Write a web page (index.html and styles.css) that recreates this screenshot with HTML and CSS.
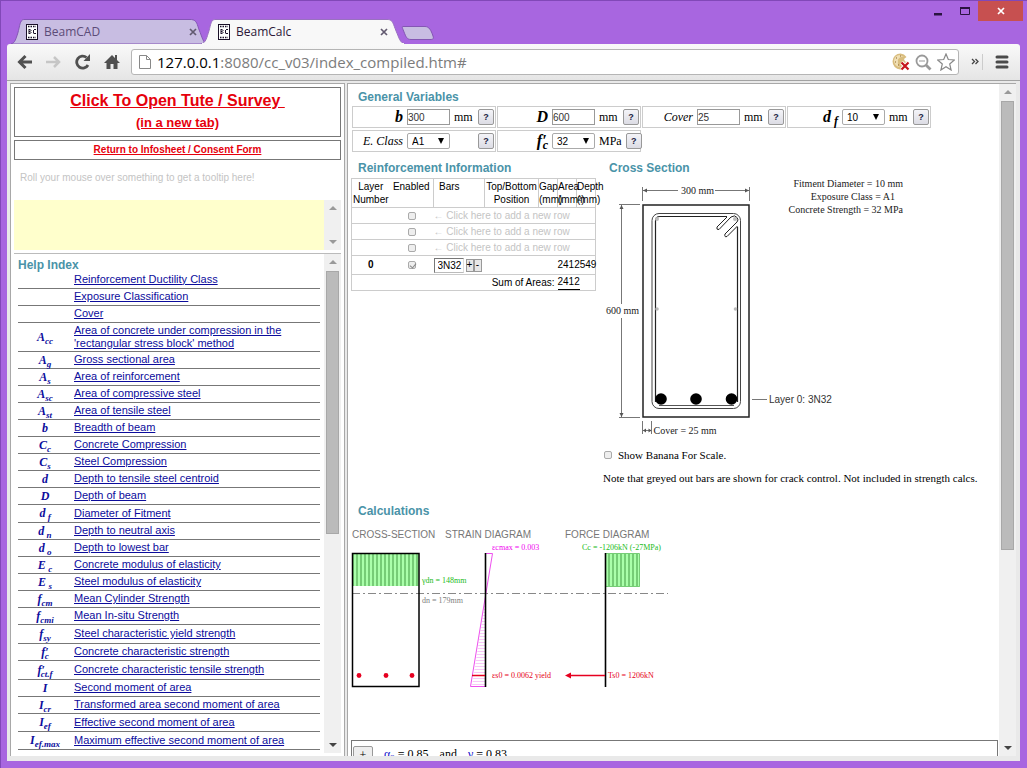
FILE: index.html
```html
<!DOCTYPE html>
<html lang="en">
<head>
<meta charset="utf-8">
<title>BeamCalc</title>
<link rel="stylesheet" href="styles.css">
</head>
<body>
<svg class="defs" width="0" height="0" aria-hidden="true">
  <symbol id="favicon" viewBox="0 0 12 16">
    <rect x="0.5" y="0.5" width="11" height="15" fill="#fff" stroke="#1a1028"/>
    <path d="M3 5v5M3 5.500h1.500M3 7.500h1.500M3 9.500h1.500M5 6v1M5 8v1M10 5.500H8M7.500 6v3.500M8 9.500h2" stroke="#1a1028" fill="none"/>
    <path d="M2 2.500h8M2 13.500h8" stroke="#1a1028" stroke-dasharray="1.500 1" stroke-width="1.300"/>
  </symbol>
  <symbol id="cross" viewBox="0 0 8 8"><path d="M1 1l6 6M7 1l-6 6" stroke="currentColor" stroke-width="1.700" fill="none"/></symbol>
</svg>
<div class="window">
  <header class="titlebar">
    <div class="tab tab-back">
      <svg class="tab-shape" viewBox="0 0 200 25" preserveAspectRatio="none"><path d="M0 25C4 24 5 20 7 14C9 7 9 1 13 .5H184C190 1 190 6 192 11C195 18 196 24 200 25Z" fill="#c8bde2" stroke="#8456b4"/></svg>
      <svg class="favicon"><use href="#favicon"/></svg><span class="tab-name">BeamCAD</span>
      <button class="tab-close" aria-label="Close BeamCAD"><svg width="8" height="8"><use href="#cross"/></svg></button>
    </div>
    <div class="tab tab-front">
      <svg class="tab-shape" viewBox="0 0 206 25" preserveAspectRatio="none"><path d="M0 25C5 24 6 18 8 12C10 5 10 1 14 .5H189C194 1 194 5 197 12C200 19 201 24 206 25Z" fill="#f8f8f8" stroke="#9870c0"/><path d="M1 25H205" stroke="#f8f8f8" stroke-width="2"/></svg>
      <svg class="favicon"><use href="#favicon"/></svg><span class="tab-name">BeamCalc</span>
      <button class="tab-close" aria-label="Close BeamCalc"><svg width="8" height="8"><use href="#cross"/></svg></button>
    </div>
    <button class="new-tab" aria-label="New tab"><svg width="34" height="16"><path d="M2 1.500H24C28 1.500 30 5 32 11C33 14 32 14.500 29 14.500H10C6 14.500 5 12 3 7C1.500 3 .5 1.500 2 1.500Z" fill="#c8bde2" stroke="#8456b4"/></svg></button>
    <div class="controls">
      <button aria-label="Minimize"><svg width="10" height="12"><rect x="1" y="8" width="8" height="2.500" fill="#2a1440"/></svg></button>
      <button aria-label="Maximize"><svg width="10" height="12"><path d="M.5 2.500H9.500V9.500H.5Z" fill="none" stroke="#2a1440"/><path d="M0 3H10" stroke="#2a1440" stroke-width="2"/></svg></button>
      <button class="win-close" aria-label="Close"><svg width="8" height="8"><use href="#cross"/></svg></button>
    </div>
  </header>
  <nav class="toolbar">
    <button aria-label="Back"><svg width="16" height="16" fill="none" stroke="#505050" stroke-width="3"><path d="M3 8H15M8.500 2L2.500 8L8.500 14"/></svg></button>
    <button aria-label="Forward"><svg width="16" height="16" fill="none" stroke="#c6c6c6" stroke-width="2.500"><path d="M0 8H13M8 3L13 8L8 13"/></svg></button>
    <button aria-label="Reload"><svg width="16" height="16"><path d="M13 11A6 6 0 1 1 11.500 3.500" fill="none" stroke="#505050" stroke-width="2.800"/><path d="M15 0V7H8.500Z" fill="#505050"/></svg></button>
    <button aria-label="Home"><svg width="16" height="16" fill="#505050"><path d="M8 1L0 9H2.500V15H6.500V10H9.500V15H13.500V9H16L13 6V1H11V4Z"/></svg></button>
    <div class="address">
      <svg width="14" height="16"><path d="M1.500 1.500H8.500L12.500 5.500V14.500H1.500Z" fill="#fff" stroke="#888"/><path d="M8.500 1.500V5.500H12.500" fill="none" stroke="#888"/></svg>
      <div class="url" role="textbox" contenteditable="true" spellcheck="false" aria-label="Address"><span class="host">127.0.0.1</span>:8080/cc_v03/index_compiled.htm#</div>
      <button aria-label="Cookies blocked"><svg width="18" height="18"><path d="M8.500 .5A8 8 0 1 0 16.500 9L13 8.500L12 6L14.500 4A8 8 0 0 0 8.500 .5Z" fill="#d9bd7e"/><path d="M8 2A6 6 0 1 0 8 14A6 5 0 0 1 6 9A5 4 0 0 1 12 4Z" fill="#f0dfb4"/><path d="M4 5h1M8 3h1M3 9h1M6 12h1" stroke="#8b642b" stroke-width="1.200"/><path d="M9.500 9.500l7 7M16.500 9.500l-7 7" stroke="#fff" stroke-width="4"/><path d="M9.500 9.500l7 7M16.500 9.500l-7 7" stroke="#c5161d" stroke-width="2.200"/></svg></button>
      <button aria-label="Zoom"><svg width="17" height="17" fill="none" stroke="#999"><circle cx="7" cy="7" r="5.500" stroke-width="1.800"/><path d="M4 7H10"/><path d="M11 11L15.500 15.500" stroke-width="2.800"/></svg></button>
      <button aria-label="Bookmark"><svg width="18" height="18"><path d="M9 1L11.300 6.500L17.300 7L12.700 11L14.100 17L9 13.800L3.900 17L5.300 11L.7 7L6.700 6.500Z" fill="#fff" stroke="#888" stroke-width="1.200"/></svg></button>
    </div>
    <button class="more" aria-label="More extensions"><svg width="8" height="8" fill="none" stroke="#444" stroke-width="1.300"><path d="M1 1L3.500 3.500L1 6M4.500 1L7 3.500L4.500 6"/></svg></button>
    <button class="menu" aria-label="Menu"><svg width="14" height="14" stroke="#4a4a4a" stroke-width="3" stroke-linecap="round"><path d="M2 2H12M2 7H12M2 12H12"/></svg></button>
  </nav>
  <div class="frames">
    <aside class="side">
      <div class="red-box survey"><a href="#">Click To Open Tute / Survey&nbsp;<br><small>(in a new tab)</small></a></div>
      <div class="red-box consent"><a href="#">Return to Infosheet / Consent Form</a></div>
      <p class="hint">Roll your mouse over something to get a tooltip here!</p>
      <div class="note"><div class="scroll off"><i class="up"></i><i class="down"></i></div></div>
      <div class="help">
        <div class="help-body">
          <h2>Help Index</h2>
          <table class="index">
            <tr><td></td><td><a href="#">Reinforcement Ductility Class</a></td></tr>
            <tr><td></td><td><a href="#">Exposure Classification</a></td></tr>
            <tr><td></td><td><a href="#">Cover</a></td></tr>
            <tr class="double"><td>A<sub>cc</sub></td><td><a href="#">Area of concrete under compression in the<br>'rectangular stress block' method</a></td></tr>
            <tr><td>A<sub>g</sub></td><td><a href="#">Gross sectional area</a></td></tr>
            <tr><td>A<sub>s</sub></td><td><a href="#">Area of reinforcement</a></td></tr>
            <tr><td>A<sub>sc</sub></td><td><a href="#">Area of compressive steel</a></td></tr>
            <tr><td>A<sub>st</sub></td><td><a href="#">Area of tensile steel</a></td></tr>
            <tr><td>b</td><td><a href="#">Breadth of beam</a></td></tr>
            <tr><td>C<sub>c</sub></td><td><a href="#">Concrete Compression</a></td></tr>
            <tr><td>C<sub>s</sub></td><td><a href="#">Steel Compression</a></td></tr>
            <tr><td>d</td><td><a href="#">Depth to tensile steel centroid</a></td></tr>
            <tr><td>D</td><td><a href="#">Depth of beam</a></td></tr>
            <tr class="tall"><td>d<sub> f</sub></td><td><a href="#">Diameter of Fitment</a></td></tr>
            <tr><td>d<sub> n</sub></td><td><a href="#">Depth to neutral axis</a></td></tr>
            <tr><td>d<sub> o</sub></td><td><a href="#">Depth to lowest bar</a></td></tr>
            <tr><td>E<sub> c</sub></td><td><a href="#">Concrete modulus of elasticity</a></td></tr>
            <tr><td>E<sub> s</sub></td><td><a href="#">Steel modulus of elasticity</a></td></tr>
            <tr><td>f<sub>cm</sub></td><td><a href="#">Mean Cylinder Strength</a></td></tr>
            <tr><td>f<sub>cmi</sub></td><td><a href="#">Mean In-situ Strength</a></td></tr>
            <tr class="taller"><td>f<sub>sy</sub></td><td><a href="#">Steel characteristic yield strength</a></td></tr>
            <tr><td>f′<sub class="under">c</sub></td><td><a href="#">Concrete characteristic strength</a></td></tr>
            <tr class="taller"><td>f′<sub class="under">ct.f</sub></td><td><a href="#">Concrete characteristic tensile strength</a></td></tr>
            <tr><td>I</td><td><a href="#">Second moment of area</a></td></tr>
            <tr><td>I<sub>cr</sub></td><td><a href="#">Transformed area second moment of area</a></td></tr>
            <tr class="tall"><td>I<sub>ef</sub></td><td><a href="#">Effective second moment of area</a></td></tr>
            <tr class="tall"><td>I<sub>ef.max</sub></td><td><a href="#">Maximum effective second moment of area</a></td></tr>
          </table>
        </div>
        <div class="scroll"><i class="up"></i><b class="thumb help-thumb"></b><i class="down"></i></div>
      </div>
    </aside>
    <div class="sash"></div>
    <main class="page">
      <div class="content">
        <h2>General Variables</h2>
        <div class="vars">
          <div class="var"><label class="sym" for="b">b</label><input id="b" value="300"><span>mm</span><button>?</button></div>
          <div class="var"><label class="sym" for="D">D</label><input id="D" value="600"><span>mm</span><button>?</button></div>
          <div class="var"><label for="cover">Cover</label><input id="cover" value="25"><span>mm</span><button>?</button></div>
          <div class="var"><label class="sym" for="df">d<sub> f</sub></label><div class="pick"><select id="df"><option>10</option></select></div><span>mm</span><button>?</button></div>
          <div class="var"><label for="ec">E. Class</label><div class="pick"><select id="ec"><option>A1</option></select></div><span></span><button>?</button></div>
          <div class="var"><label class="sym" for="fc">f′<sub class="under">c</sub></label><div class="pick"><select id="fc"><option>32</option></select></div><span>MPa</span><button>?</button></div>
        </div>
        <div class="columns">
          <section class="reo">
            <h2>Reinforcement Information</h2>
            <table class="layers">
              <colgroup><col class="c-layer"><col class="c-on"><col class="c-bars"><col class="c-pos"><col class="c-num"><col class="c-num"><col class="c-num"></colgroup>
              <thead><tr><th>Layer<br>Number</th><th>Enabled</th><th class="bars">Bars</th><th>Top/Bottom<br>Position</th><th>Gap<br>(mm)</th><th>Area<br>(mm²)</th><th>Depth<br>(mm)</th></tr></thead>
              <tbody>
                <tr class="blank"><td></td><td><input type="checkbox" aria-label="Enable new row"></td><td colspan="5">← Click here to add a new row</td></tr>
                <tr class="blank"><td></td><td><input type="checkbox" aria-label="Enable new row"></td><td colspan="5">← Click here to add a new row</td></tr>
                <tr class="blank"><td></td><td><input type="checkbox" aria-label="Enable new row"></td><td colspan="5">← Click here to add a new row</td></tr>
                <tr class="layer"><td><strong>0</strong></td><td><input type="checkbox" checked disabled aria-label="Layer 0 enabled"></td><td><div class="bar-edit"><input value="3N32" aria-label="Bars"><button>+</button><button>-</button></div></td><td></td><td></td><td class="figures" colspan="2"><span>2412</span><span>549</span></td></tr>
                <tr class="sum"><td colspan="5">Sum of Areas:</td><td class="figures" colspan="2"><span class="total">2412</span></td></tr>
              </tbody>
            </table>
          </section>
          <section class="cross">
            <h2>Cross Section</h2>
            <svg class="beam" width="395" height="264" viewBox="603 178 395 264" fill="none">
              <g stroke="#777"><path d="M642.500 187V201M749.500 187V201M643 190.500H678M715 190.500H749M619 204.500H640M619 417.500H640M621.500 205V304M621.500 318V417M642.500 421V434M651.500 421V434M643 430.500H651M752 399.500H767"/></g>
              <path d="M643 190.500l4-2v4zM749 190.500l-4-2v4zM621.500 205l-2 4h4zM621.500 417l-2-4h4zM643 430.500l3-2v4zM651.500 430.500l-3-2v4z" fill="#555"/>
              <rect x="643" y="205" width="106" height="212" stroke="#222" stroke-width="1.500"/>
              <rect x="652" y="213.500" width="88.500" height="195" rx="7" stroke="#444"/>
              <path d="M655.500 402V221Q655.500 216.500 660 216.500H727M737.500 227V402" stroke="#222" stroke-width="1.200"/>
              <path d="M659 405.500H734" stroke="#555"/>
              <path d="M727 217L717 227Q716 230 719 229.500L731 217Q735 214.500 737 217.500Q739 220 737 222L725 234Q724 237.500 727 236.500L737.500 226" stroke="#222"/>
              <g fill="#bbb"><circle cx="657" cy="219" r="2"/><circle cx="735" cy="219" r="2"/><circle cx="657" cy="309" r="1.800"/><circle cx="735.500" cy="309" r="1.800"/></g>
              <g fill="#000"><circle cx="661" cy="399" r="5.800"/><circle cx="696" cy="399" r="5.800"/><circle cx="731.500" cy="399" r="5.800"/></g>
              <g class="dims"><text x="681" y="194">300 mm</text><text x="606" y="314">600 mm</text><text x="653.500" y="434">Cover = 25 mm</text><text x="903" y="187" text-anchor="end">Fitment Diameter = 10 mm</text><text x="895" y="200" text-anchor="end">Exposure Class = A1</text><text x="903" y="213" text-anchor="end">Concrete Strength = 32 MPa</text></g>
              <text class="layer-tag" x="769" y="403">Layer 0: 3N32</text>
            </svg>
            <label class="banana"><input type="checkbox">Show Banana For Scale.</label>
            <p>Note that greyed out bars are shown for crack control. Not included in strength calcs.</p>
          </section>
        </div>
        <section class="calcs">
          <h2>Calculations</h2>
          <svg class="diagrams" width="330" height="166" viewBox="351 524 330 166" fill="none">
            <defs><pattern id="stripes" width="4" height="10" patternUnits="userSpaceOnUse"><rect width="4" height="10" fill="#aaffaa"/><rect width="2" height="10" fill="#76cc76"/></pattern>
            <pattern id="pink" width="4" height="3" patternUnits="userSpaceOnUse"><rect width="4" height="1" fill="#f8c8f8"/></pattern></defs>
            <g class="caps"><text x="352" y="538">CROSS-SECTION</text><text x="445" y="538">STRAIN DIAGRAM</text><text x="565" y="538">FORCE DIAGRAM</text></g>
            <rect x="353" y="554" width="66" height="32" fill="url(#stripes)"/>
            <rect x="606" y="554" width="34" height="33" fill="url(#stripes)"/><path d="M606 553.500H639.500V586.500H606" stroke="#76cc76"/>
            <path d="M352 593.500H668" stroke="#888" stroke-dasharray="8 3 2 3"/>
            <path d="M485 602L472 686H485Z" fill="url(#pink)"/>
            <path d="M485 553.500H492.500L470.500 686.500H485" stroke="#ee50ee"/>
            <rect x="352.500" y="553.500" width="66.500" height="133" stroke="#000" stroke-width="1.500"/>
            <path d="M485.500 553V687M605.500 553V687" stroke="#000" stroke-width="1.600"/>
            <g fill="#e60020"><circle cx="359" cy="675.500" r="2.400"/><circle cx="386" cy="675.500" r="2.400"/><circle cx="412" cy="675.500" r="2.400"/><path d="M565 675.500l6-3v6z"/></g>
            <path d="M472 675.500H485M570 675.500H605" stroke="#e60020" stroke-width="1.400"/>
            <g class="tags"><text x="492" y="550" fill="#f000f0">εcmax = 0.003</text><text x="582" y="550" fill="#22bb22">Cc = -1206kN (-27MPa)</text><text x="422" y="583" fill="#22bb22">γdn = 148mm</text><text x="422" y="603" fill="#808080">dn = 179mm</text><text x="492" y="678" fill="#e60020">εs0 = 0.0062 yield</text><text x="608" y="678" fill="#e60020">Ts0 = 1206kN</text></g>
          </svg>
          <div class="working"><button>+</button><span><a href="#">α<sub>2</sub></a> = 0.85</span><span>and</span><span><a href="#">γ</a> = 0.83</span></div>
        </section>
      </div>
      <div class="scroll"><i class="up"></i><b class="thumb page-thumb"></b><i class="down"></i></div>
    </main>
  </div>
</div>
</body>
</html>
```

FILE: styles.css
```css
* { box-sizing: border-box; }
body { margin: 0; font-family: "Liberation Sans", Arial, sans-serif; font-size: 10px; color: #000; }
button { font: inherit; padding: 0; border: 0; background: none; color: inherit; }
svg { display: block; flex: none; }
.defs { position: absolute; }
h2 { margin: 0; font-size: 12px; line-height: 14px; font-weight: bold; color: #4a93a8; }

.window { display: flex; flex-direction: column; height: 100vh; padding: 0 7px 7px; background: #a866e0; border-top: 1px solid #8148b8; box-shadow: inset 1px 0 #8148b8; }
.titlebar { display: flex; align-items: flex-end; height: 43px; flex: none; padding-left: 4px; }
.tab { position: relative; display: flex; align-items: center; height: 25px; font: 12px "Open Sans", sans-serif; }
.tab-back { width: 196px; padding: 0 10px 0 15px; color: #5c4c78; }
.tab-front { width: 204px; margin-left: -6px; padding: 0 17px 0 17px; color: #2c1838; }
.tab-shape { position: absolute; inset: 0; width: 100%; height: 100%; }
.favicon { position: relative; width: 12px; height: 16px; }
.tab-name { position: relative; flex: 1; padding-left: 6px; }
.tab-close { position: relative; color: #625a70; }
.new-tab { align-self: flex-end; margin: 0 0 3px -4px; }
.controls { display: flex; align-self: flex-start; align-items: center; margin-left: auto; margin-right: -3px; height: 20px; gap: 17px; }
.win-close { display: grid; place-items: center; width: 45px; height: 20px; margin-left: -9px; background: #c75050; color: #fff; }

.toolbar { display: flex; align-items: center; height: 37px; flex: none; padding: 0 11px 0 10px; gap: 13px; background: linear-gradient(#f9f9f9, #e5e5e5); border-bottom: 1px solid #a2a2a2; border-radius: 3px 3px 0 0; }
.address { display: flex; align-items: center; flex: 1; gap: 5px; height: 26px; margin: 0 -1px 0 -2px; padding: 0 3px 0 6px; background: #fff; border: 1px solid #b5b5b5; border-radius: 3px; }
.url { flex: 1; font: 15px "Open Sans", sans-serif; color: #7c7c7c; white-space: nowrap; outline: 0; overflow: hidden; }
.host { color: #000; }
.more { height: 16px; padding-right: 3px; margin-right: -1px; border-right: 1px solid #ccc; }

.frames { display: flex; flex: 1; min-height: 0; padding: 2px 4px 5px 3px; background: #e9e9e9; }
.side { display: flex; flex-direction: column; width: 335px; flex: none; padding: 3px; background: #fff; border: 1px solid #a8a8a8; border-bottom: 0; }
.sash { width: 2px; flex: none; }
.page { display: flex; flex: 1; min-width: 0; background: #fff; border: 1px solid #a8a8a8; border-width: 1px 0 0 1px; }

.red-box { border: 1px solid #777; text-align: center; font-weight: bold; }
.red-box a { color: #e6000c; }
.survey { padding: 2px 0 3px; font-size: 16px; line-height: 21px; margin-bottom: 3px; }
.survey small { font-size: 13px; }
.consent { font-size: 10px; line-height: 18px; }
.hint { margin: 0; padding: 10px 6px 14px; line-height: 16px; color: #c4c4c4; }
.note { display: flex; justify-content: flex-end; height: 50px; margin-bottom: 3px; flex: none; background: #ffffcc; }
.help { display: flex; flex: 1; min-height: 0; border-top: 1px solid #bbb; }
.help-body { flex: 1; padding: 4px; overflow: hidden; }
.help-body h2 { height: 13px; }
.index { width: 100%; border-collapse: collapse; font-size: 11px; line-height: 13px; }
.index td { height: 17px; padding: 1px 0; border-bottom: 1px solid #777; }
.index .double td { height: 29px; padding: 1px 0; }
.index .tall td { height: 18px; }
.index .taller td { height: 19px; }
.index td:first-child { width: 56px; padding-right: 2px; text-align: center; font: italic bold 12px/12px "Liberation Serif", serif; color: #0c0c9c; }
.index a { color: #0c0c9c; }
sub { font-size: 75%; line-height: 0; vertical-align: -3px; }
sub.under { margin-left: -4px; }

.scroll { display: flex; flex-direction: column; align-items: center; width: 17px; flex: none; background: #f0f0f0; padding: 6px 0; }
.scroll i { width: 0; height: 0; border: 4px solid transparent; flex: none; }
.scroll .up { border-top: 0; border-bottom-color: #999; }
.scroll .down { margin-top: auto; border-bottom: 0; border-top-color: #444; }
.scroll.off .down { border-top-color: #999; }
.thumb { width: 13px; margin-top: 7px; background: #bbb; border: 1px solid #a8a8a8; }
.help-thumb { height: 54%; }
.page-thumb { height: 68%; }

.content { flex: 1; min-width: 0; padding: 6px 1px 0 3px; overflow: hidden; }
.content h2 { padding-left: 7px; }
.vars { display: flex; flex-wrap: wrap; gap: 2px 1px; max-width: 600px; padding: 2px 0 0 1px; }
.var { display: grid; grid-template-columns: 50px 43px 1fr 16px; column-gap: 4px; align-items: center; width: 144px; height: 22px; padding-right: 1px; border: 1px solid #ccc; font-family: "Liberation Serif", serif; font-size: 12px; }
.var label { text-align: right; font-style: italic; font-size: 12px; }
.var label.sym { font-size: 16px; line-height: 18px; font-weight: bold; }
.var > input, .pick select { width: 100%; height: 16px; padding: 0; border: 1px solid #999; font: 10px "Liberation Sans", sans-serif; background: #fff; color: #333; }
.var > button { height: 16px; border: 1px solid #999; border-radius: 2px; background: linear-gradient(#f4f4f8, #dcdce4); font: bold 9px "Liberation Sans", sans-serif; color: #224; }
.pick { position: relative; display: flex; }
.pick select { appearance: none; padding-left: 4px; border-radius: 2px; border-color: #aaa; color: #000; }
.pick::after { content: ""; position: absolute; right: 6px; top: 5px; border: 3px solid transparent; border-top: 6px solid #000; border-bottom: 0; pointer-events: none; }

.columns { display: flex; margin-top: 9px; }
.reo { width: 252px; flex: none; }
.layers { width: 244px; margin-top: 3px; table-layout: fixed; border-collapse: collapse; border: 1px solid #ccc; }
.c-layer { width: 38px; } .c-on { width: 44px; } .c-bars { width: 51px; } .c-pos { width: 54px; } .c-num { width: 19px; }
.layers th { height: 29px; padding: 1px 0; vertical-align: top; font-weight: normal; line-height: 13px; border-left: 1px solid #ccc; white-space: nowrap; }
.layers th:nth-child(2) { border-left: 0; }
.layers th:nth-child(n+5) { text-align: left; }
.layers th.bars { text-align: left; padding-left: 5px; }
.layers td { height: 16px; padding: 0; border-top: 1px solid #ccc; text-align: center; line-height: 12px; }
.blank td:last-child { text-align: left; color: #c4c4c4; }
.layers .layer td { height: 19px; }
.layers .figures { text-align: left; white-space: nowrap; }
input[type="checkbox"] { appearance: none; display: block; width: 8px; height: 8px; margin: 0 auto; border: 1px solid #aaa; border-radius: 2px; background: #eee; }
input[type="checkbox"]:checked::after { content: ""; display: block; width: 3px; height: 5px; margin-left: 2px; border: solid #888; border-width: 0 1px 1px 0; transform: rotate(40deg); }
.bar-edit { display: flex; align-items: center; }
.bar-edit input { width: 30px; height: 15px; margin-right: 2px; padding: 0 0 0 3px; border: 1px solid #777; border-right-color: #ddd; border-bottom-color: #bbb; font: 10px "Liberation Sans", sans-serif; }
.bar-edit button { width: 8px; height: 13px; border: 1px solid #999; background: #e8e8e8; line-height: 10px; }
.layers .sum td:first-child { padding-right: 3px; text-align: right; }
.total { display: inline-block; line-height: 14px; border-bottom: 1px solid #000; }

.cross { flex: 1; min-width: 0; font: 11px "Liberation Serif", serif; }
.cross h2 { padding-left: 6px; font-family: "Liberation Sans", sans-serif; }
.dims { font: 10px "Liberation Serif", serif; fill: #222; }
.layer-tag { font-size: 10px; font-family: "Liberation Sans", sans-serif; fill: #333; }
.beam { margin-top: 3px; }
.banana { display: flex; align-items: center; gap: 6px; height: 26px; padding-left: 1px; }
.banana input[type="checkbox"] { margin: 0; }
.cross p { margin: 2px 0 0; line-height: 16px; white-space: nowrap; }

.calcs { margin-top: 18px; }
.diagrams { margin-top: 6px; max-width: 100%; }
.caps { font: 10px "Liberation Sans", sans-serif; fill: #777; }
.tags { font: 8px "Liberation Serif", serif; }
.working { display: flex; gap: 11px; margin-top: 50px; padding: 5px 1px; border: 1px solid #777; font: 12px/16px "Liberation Serif", serif; }
.working button { width: 20px; height: 18px; border: 1px solid #999; border-radius: 2px; background: #eee; line-height: 14px; }
.working a { color: #0c0ccc; text-decoration: none; }
```
